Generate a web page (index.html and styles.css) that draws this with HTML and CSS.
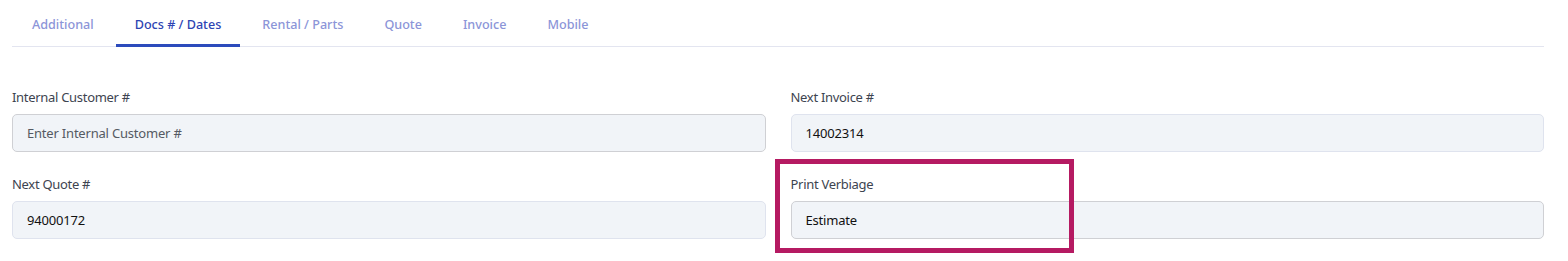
FILE: index.html
```html
<!DOCTYPE html>
<html>
<head>
<meta charset="utf-8">
<link rel="stylesheet" href="styles.css">
</head>
<body>
<div class="page">
  <nav class="tabs">
    <a class="tab">Additional</a>
    <a class="tab active">Docs # / Dates</a>
    <a class="tab">Rental / Parts</a>
    <a class="tab">Quote</a>
    <a class="tab">Invoice</a>
    <a class="tab">Mobile</a>
  </nav>
  <div class="form">
    <div class="field">
      <label class="label">Internal Customer #</label>
      <div class="input grey placeholder">Enter Internal Customer #</div>
    </div>
    <div class="field">
      <label class="label">Next Invoice #</label>
      <div class="input">14002314</div>
    </div>
    <div class="field">
      <label class="label">Next Quote #</label>
      <div class="input">94000172</div>
    </div>
    <div class="field">
      <label class="label">Print Verbiage</label>
      <div class="input grey">Estimate</div>
    </div>
  </div>
  <div class="highlight"></div>
</div>
</body>
</html>
```

FILE: styles.css
```css
html, body {
  margin: 0;
  padding: 0;
  background: #ffffff;
}
body {
  font-family: "Noto Sans", "Open Sans", sans-serif;
  font-size: 13px;
  color: #333;
}
.page {
  position: relative;
  min-height: 261px;
  box-sizing: border-box;
  padding: 0 24px 0 12px;
}
.tabs {
  display: flex;
  gap: 3px;
  height: 46px;
  border-bottom: 1px solid #e3e5f0;
}
.tab {
  display: block;
  padding: 15px 19px 0;
  height: 29px;
  line-height: 20px;
  font-size: 12.6px;
  font-weight: 500;
  color: #8c95d8;
  margin-bottom: -1px;
  border-bottom: 3px solid transparent;
}
.tabs .tab:first-child {
  padding-left: 20px;
}
.tab.active {
  color: #2d44b3;
  border-bottom-color: #2c4bbc;
}
.form {
  display: grid;
  grid-template-columns: 1fr 1fr;
  column-gap: 25px;
  row-gap: 23px;
  margin-top: 41px;
}
.field {
  display: flex;
  flex-direction: column;
  gap: 8px;
}
.label {
  display: block;
  line-height: 18px;
  font-size: 13px;
  letter-spacing: -0.3px;
  color: #3d4450;
}
.input {
  box-sizing: border-box;
  height: 38px;
  line-height: 36px;
  padding: 0 14px;
  background: #f1f4f8;
  border: 1px solid #dfe3ee;
  border-radius: 5px;
  color: #111;
  font-size: 13px;
  letter-spacing: -0.2px;
}
.input.grey {
  border-color: #cfd0d4;
}
.input.placeholder {
  color: #555a63;
}
.highlight {
  position: absolute;
  left: 775px;
  top: 159px;
  width: 289px;
  height: 84px;
  border: 5px solid #b51a62;
}
```
